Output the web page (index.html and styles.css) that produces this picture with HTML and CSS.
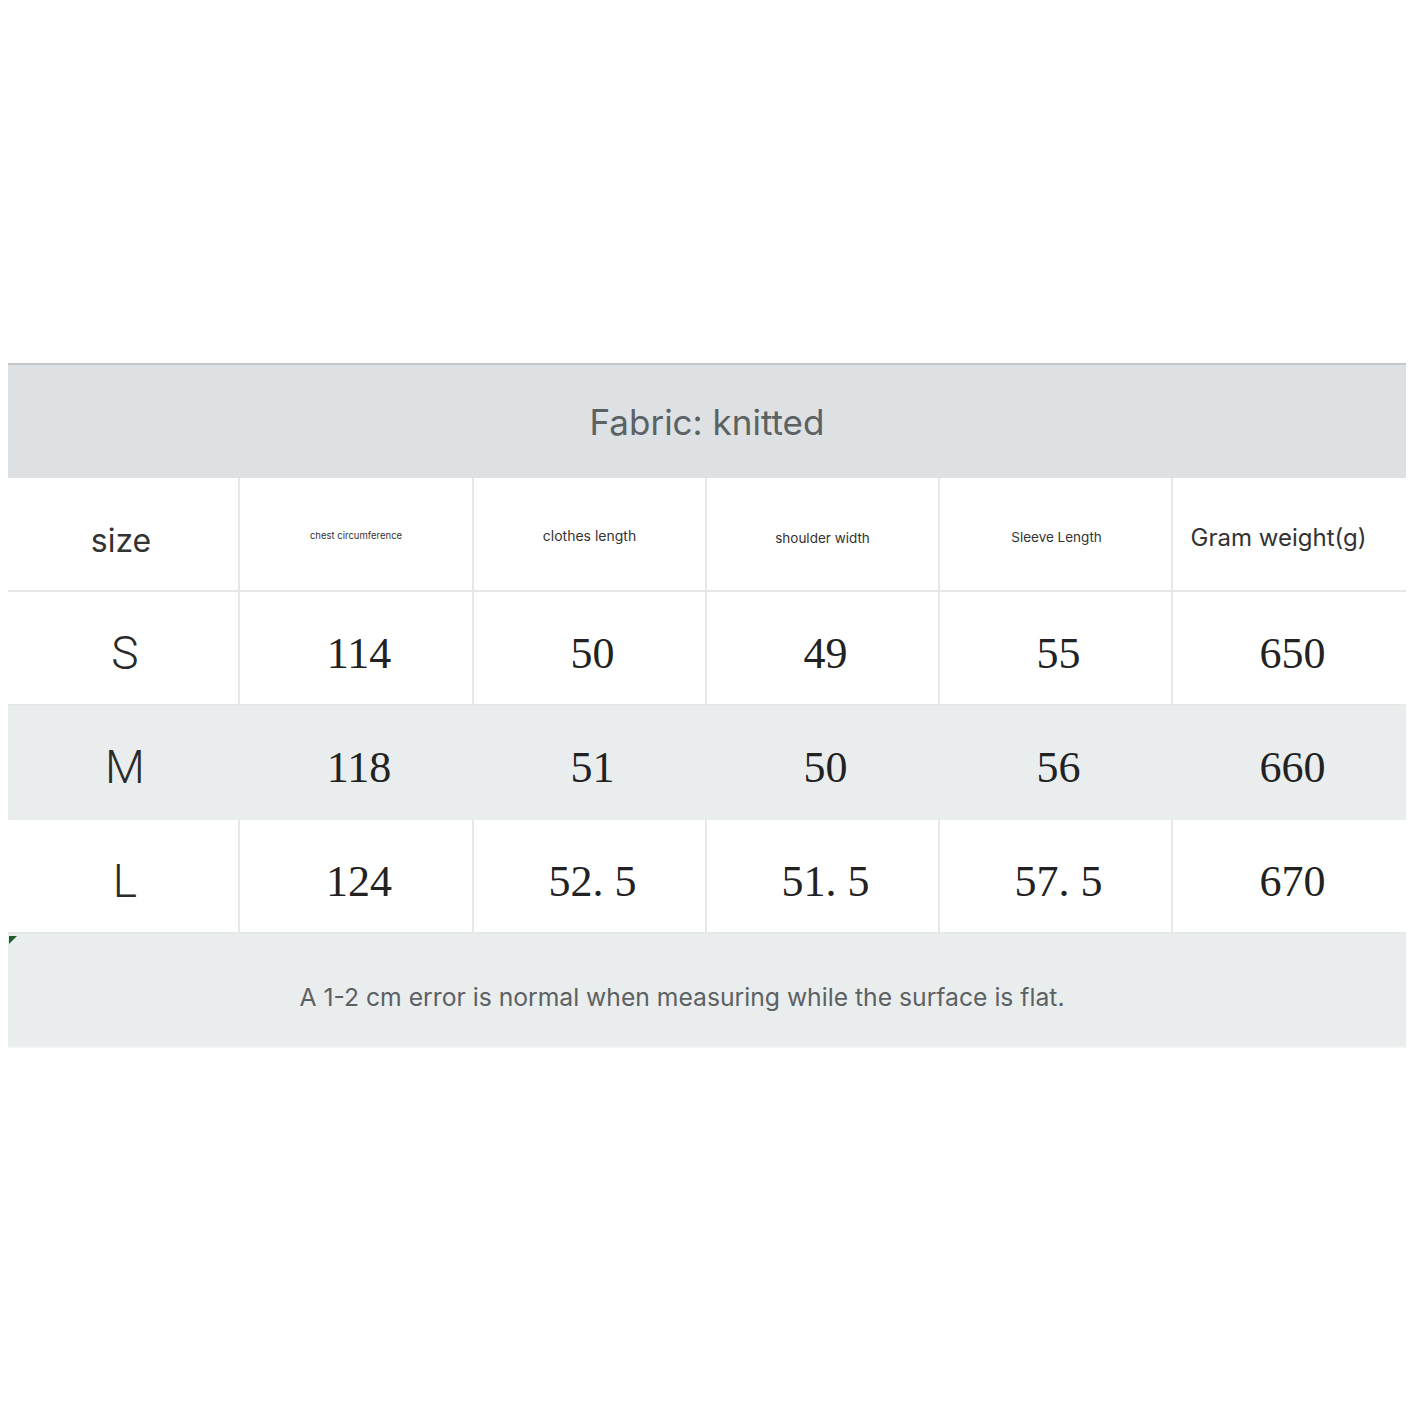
FILE: index.html
```html
<!DOCTYPE html>
<html>
<head>
<meta charset="utf-8">
<link rel="stylesheet" href="styles.css">
</head>
<body>
<div class="page">
  <div class="chart">
    <div class="title">Fabric: knitted</div>
    <div class="row head">
      <div class="cell"><span class="h-size">size</span></div>
      <div class="cell"><span class="h-chest">chest circumference</span></div>
      <div class="cell"><span class="h-len">clothes length</span></div>
      <div class="cell"><span class="h-sh">shoulder width</span></div>
      <div class="cell"><span class="h-sl">Sleeve Length</span></div>
      <div class="cell"><span class="h-gw">Gram weight(g)</span></div>
    </div>
    <div class="row">
      <div class="cell sz">S</div>
      <div class="cell num">114</div>
      <div class="cell num">50</div>
      <div class="cell num">49</div>
      <div class="cell num">55</div>
      <div class="cell num">650</div>
    </div>
    <div class="row alt">
      <div class="cell sz">M</div>
      <div class="cell num">118</div>
      <div class="cell num">51</div>
      <div class="cell num">50</div>
      <div class="cell num">56</div>
      <div class="cell num">660</div>
    </div>
    <div class="row">
      <div class="cell sz">L</div>
      <div class="cell num">124</div>
      <div class="cell num">52. 5</div>
      <div class="cell num">51. 5</div>
      <div class="cell num">57. 5</div>
      <div class="cell num">670</div>
    </div>
    <div class="foot"><span class="mark"></span>A 1-2 cm error is normal when measuring while the surface is flat.</div>
  </div>
</div>
</body>
</html>
```

FILE: styles.css
```css
html, body {
  margin: 0;
  padding: 0;
  background: #ffffff;
}

.page {
  padding: 363px 8px 0 8px;
}

.chart {
  width: 1398px;
  border-top: 2px solid #c3c7c9;
  font-family: Inter, "Open Sans", sans-serif;
}

.title {
  height: 113px;
  background: #dde1e3;
  color: #5c6163;
  font-size: 35px;
  display: flex;
  align-items: center;
  justify-content: center;
  box-sizing: border-box;
}

.row {
  display: grid;
  grid-template-columns: 232px 234px 233px 233px 233px 233px;
  height: 114px;
  background: #ffffff;
  border-bottom: 2px solid #e6e8e8;
  box-sizing: border-box;
}

.row.alt {
  background: #eaeded;
  border-bottom-color: #eaeded;
}

.row.alt .cell {
  border-right-color: #eaeded;
}

.cell {
  display: flex;
  align-items: center;
  justify-content: center;
  border-right: 2px solid #e6e8e8;
  color: #222222;
}

.cell:last-child {
  border-right: none;
}

.head .cell {
  color: #333333;
}

.h-size { font-size: 32px; margin-top: 12px; margin-left: -4px; }
.h-chest { font-size: 9.5px; margin-top: 2px; }
.h-len { font-size: 14px; margin-top: 2px; }
.h-sh { font-size: 13.5px; margin-top: 8px; }
.h-sl { font-size: 13.5px; margin-top: 6px; margin-left: 2px; }
.h-gw { font-size: 24px; margin-top: 6px; margin-left: -22px; }

.sz {
  font-family: Roboto, "Liberation Sans", sans-serif;
  font-weight: 300;
  font-size: 46px;
  color: #2a2a2a;
  padding-top: 10px;
  padding-left: 4px;
}

.num {
  font-family: "Liberation Serif", "DejaVu Serif", serif;
  font-size: 44px;
  color: #222222;
  padding-top: 10px;
  padding-left: 6px;
  white-space: pre;
}

.foot {
  position: relative;
  height: 114px;
  background: #eaeded;
  color: #5c6163;
  font-size: 24.7px;
  display: flex;
  align-items: center;
  justify-content: center;
  padding-right: 50px;
  padding-top: 14px;
  box-sizing: border-box;
  border-bottom: 2px solid #f2f3f3;
}

.mark {
  position: absolute;
  left: 1px;
  top: 2px;
  width: 0;
  height: 0;
  border-top: 8px solid #1f5e2a;
  border-right: 8px solid transparent;
}
```
